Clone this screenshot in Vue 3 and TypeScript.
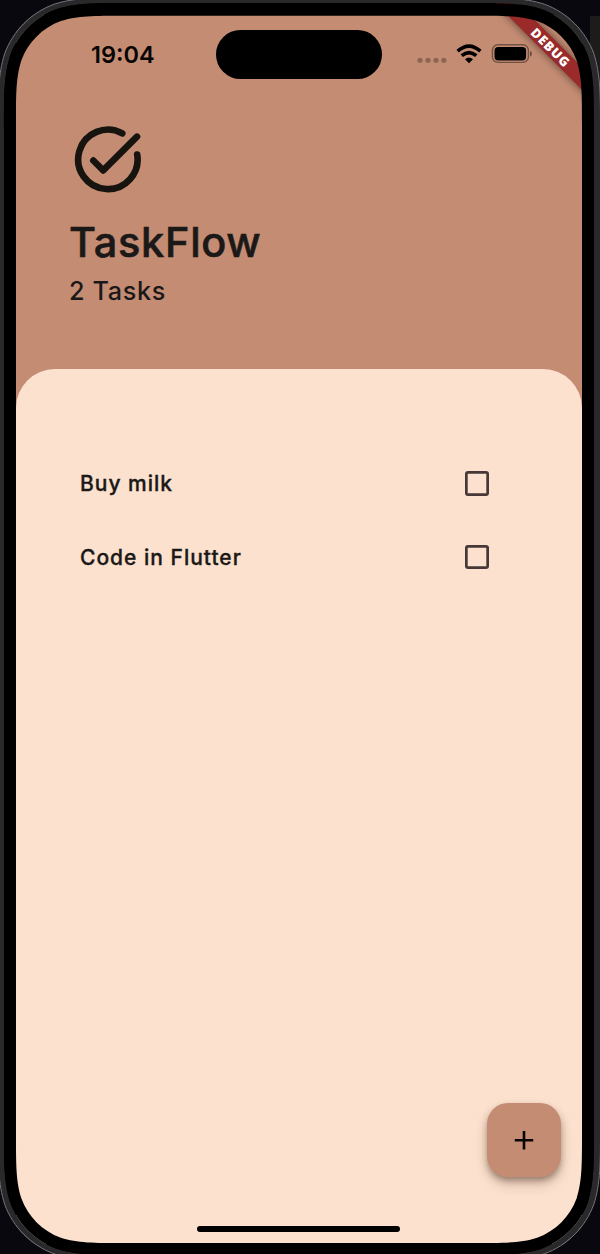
<script setup lang="ts">
import { ref, computed } from 'vue'

interface Task {
  name: string
  done: boolean
}

const tasks = ref<Task[]>([
  { name: 'Buy milk', done: false },
  { name: 'Code in Flutter', done: false },
])
const countLabel = computed(() => `${tasks.value.length} Tasks`)

// Rounded rectangle with continuous-curvature corners
function squircle(l: number, t: number, r: number, b: number, k: number): string {
  const A = 1.528665 * k
  const B = 1.08849 * k
  const C = 0.868407 * k
  const D = 0.631494 * k
  const E = 0.372824 * k
  const F = 0.16906 * k
  const G = 0.0749114 * k
  return [
    `M${l} ${t + A}`,
    `C${l} ${t + B} ${l} ${t + C} ${l + G} ${t + D}`,
    `C${l + F} ${t + E} ${l + E} ${t + F} ${l + D} ${t + G}`,
    `C${l + C} ${t} ${l + B} ${t} ${l + A} ${t}`,
    `L${r - A} ${t}`,
    `C${r - B} ${t} ${r - C} ${t} ${r - D} ${t + G}`,
    `C${r - E} ${t + F} ${r - F} ${t + E} ${r - G} ${t + D}`,
    `C${r} ${t + C} ${r} ${t + B} ${r} ${t + A}`,
    `L${r} ${b - A}`,
    `C${r} ${b - B} ${r} ${b - C} ${r - G} ${b - D}`,
    `C${r - F} ${b - E} ${r - E} ${b - F} ${r - D} ${b - G}`,
    `C${r - C} ${b} ${r - B} ${b} ${r - A} ${b}`,
    `L${l + A} ${b}`,
    `C${l + B} ${b} ${l + C} ${b} ${l + D} ${b - G}`,
    `C${l + E} ${b - F} ${l + F} ${b - E} ${l + G} ${b - D}`,
    `C${l} ${b - C} ${l} ${b - B} ${l} ${b - A}Z`,
  ].join('')
}

const screen = squircle(16, 15.7, 582, 1243, 71)
const glass = squircle(4, 3, 594, 1255, 83)
const body = squircle(-2, -2.5, 600.5, 1260.5, 89)
const page = 'M0 0H600V1254H0Z'
</script>

<template>
  <div class="device">
    <main class="app">
      <div class="status">
        <span class="time">19:04</span>
        <span class="island"></span>
        <svg class="signals" width="118" height="24" viewBox="0 0 118 24">
          <g fill="#000" opacity="0.27">
            <circle cx="6" cy="18.3" r="2.6" />
            <circle cx="14" cy="18.3" r="2.6" />
            <circle cx="22" cy="18.3" r="2.6" />
            <circle cx="29.8" cy="18.3" r="2.6" />
          </g>
          <g fill="none" stroke="#000" stroke-width="3.6">
            <path d="M43.6 9.2Q55 -0.9 66.4 9.2" />
            <path d="M47.7 13.7Q55 7.4 62.3 13.7" />
          </g>
          <path d="M51 17.2Q55 13.8 59 17.2L55 21.2Z" fill="#000" />
          <rect x="78.400" y="2.800" width="36" height="17.600" rx="5.500" fill="none" stroke="#000" stroke-opacity=".42" stroke-width="1.400" />
          <rect x="80.500" y="5" width="31.600" height="13.400" rx="3.700" fill="#000" />
          <path d="M116 8.700Q118 9.600 118 11.700T116 14.700Z" fill="#000" opacity=".45" />
        </svg>
      </div>

      <header class="header">
        <svg class="logo" width="68" height="68" viewBox="0 0 68 68" fill="none" stroke="#17130f" stroke-width="6.600" stroke-linecap="round" stroke-linejoin="round">
          <path d="M48.300 7.400A29.700 29.700 0 1 0 63.200 28.500" />
          <path d="M19.300 34.500L29.200 44.400L63 10.700" />
        </svg>
        <h1>TaskFlow</h1>
        <p>{{ countLabel }}</p>
      </header>

      <section class="sheet">
        <label v-for="task in tasks" :key="task.name" class="row">
          <span>{{ task.name }}</span>
          <input v-model="task.done" type="checkbox" />
        </label>
      </section>
    </main>

    <div class="debug">DEBUG</div>
    <button class="add" aria-label="Add task">
      <svg width="20" height="20" viewBox="0 0 20 20"><path d="M10 1V19.400M.8 10.300H19.200" stroke="#080604" stroke-width="2.600" /></svg>
    </button>
    <div class="home"></div>

    <svg class="frame" width="600" height="1254" viewBox="0 0 600 1254" fill-rule="evenodd">
      <path :d="page + body" fill="#08080e" />
      <path d="M590 16H600V120H590Z" fill="#1d1c1a" />
      <path :d="body + glass" fill="#29282b" />
      <path :d="glass + screen" fill="#000" />
      <path :d="body" fill="none" stroke="#77757a" stroke-width="1" />
    </svg>
  </div>
</template>

<style>
body {
  margin: 0;
  background: #08080e;
}
</style>

<style scoped>
.device {
  position: relative;
  box-sizing: border-box;
  width: 600px;
  height: 1254px;
  padding: 15px 18px 10px 16px;
  overflow: hidden;
  background: #000;
  font-family: Inter, "Liberation Sans", sans-serif;
  color: #1b1818;
}
.app {
  display: flex;
  flex-direction: column;
  height: 1229px;
  background: #c48c73;
}
.status {
  display: flex;
  height: 64px;
  padding-top: 15px;
  box-sizing: border-box;
  flex: none;
}
.time {
  width: 125px;
  padding-left: 75px;
  font-size: 23.500px;
  line-height: 49px;
  font-weight: 600;
  color: #080505;
}
.island {
  width: 165.500px;
  height: 49px;
  border-radius: 25px;
  background: #000;
}
.signals {
  margin: 12px 0 0 32.500px;
}
.header {
  height: 290px;
  flex: none;
  padding: 47px 0 0 53px;
  box-sizing: border-box;
}
.logo {
  display: block;
  margin-left: 5px;
}
h1 {
  margin: 22px 0 0;
  font-size: 41.500px;
  line-height: 52px;
  font-weight: 500;
  letter-spacing: 0.700px;
  -webkit-text-stroke: 0.600px #1b1818;
}
p {
  margin: 7px 0 0;
  font-size: 25.200px;
  line-height: 32px;
  font-weight: 500;
  letter-spacing: 0.650px;
}
.sheet {
  flex: 1;
  padding: 78px 93px 0 64px;
  border-radius: 39px 39px 0 0;
  background: #fce1ce;
}
.row {
  display: flex;
  align-items: center;
  justify-content: space-between;
  height: 73.700px;
  font-size: 21px;
  font-weight: 500;
  letter-spacing: 1px;
  -webkit-text-stroke: 0.350px #1b1818;
}
input {
  appearance: none;
  width: 24.500px;
  height: 24.500px;
  margin: -1px 0 0;
  border-radius: 3px;
  box-shadow: inset 0 0 0 2.700px #453836;
}
.debug {
  position: absolute;
  left: 480.200px;
  top: 38.600px;
  width: 140px;
  height: 15.800px;
  padding-left: 1px;
  transform: rotate(45deg);
  background: #9a2b2a;
  box-shadow: 0 0 8px rgba(0, 0, 0, 0.55);
  color: #fff;
  font-family: "Open Sans", "Noto Sans", sans-serif;
  font-size: 13px;
  font-weight: 800;
  line-height: 16px;
  letter-spacing: 0.900px;
  text-align: center;
}
.add {
  position: absolute;
  left: 487px;
  top: 1103px;
  display: grid;
  place-items: center;
  width: 74px;
  height: 74px;
  padding: 0;
  border: 0;
  border-radius: 21px;
  background: #c48c73;
  box-shadow: 0 4px 7px -1px rgba(60, 35, 20, 0.45), 0 7px 13px rgba(60, 35, 20, 0.2);
}
.home {
  position: absolute;
  left: 197px;
  top: 1226px;
  width: 203px;
  height: 6px;
  border-radius: 3px;
  background: #000;
}
.frame {
  position: absolute;
  left: 0;
  top: 0;
  pointer-events: none;
}
</style>
